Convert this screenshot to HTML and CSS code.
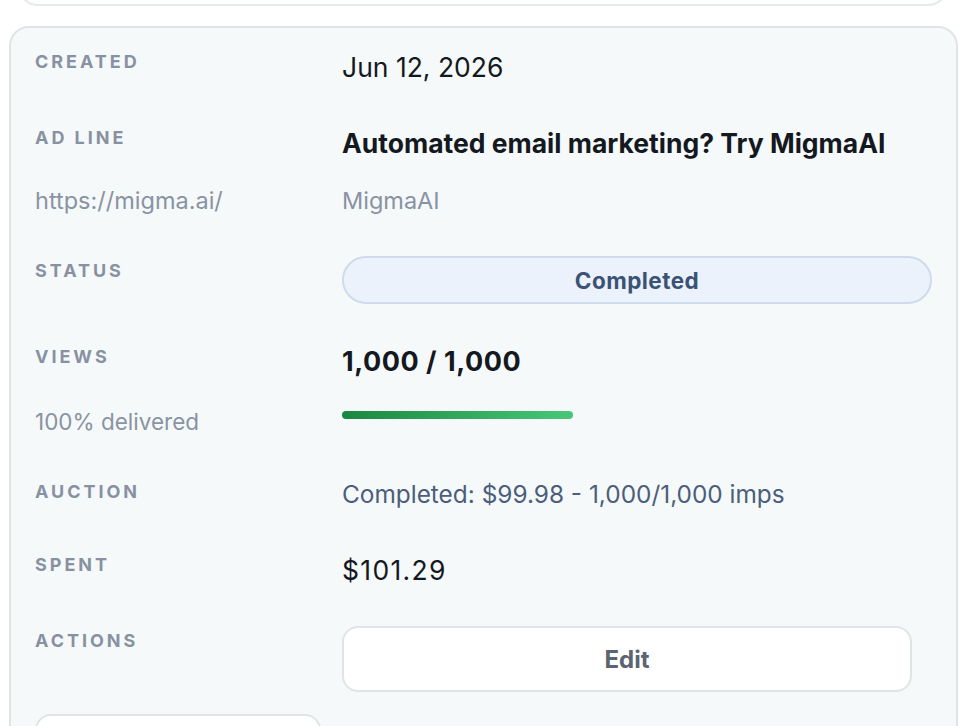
FILE: index.html
```html
<!DOCTYPE html>
<html lang="en">
<head>
    <meta charset="UTF-8">
    <meta name="viewport" content="width=device-width, initial-scale=1.0">
    <title>Ad details</title>
<link rel="stylesheet" href="styles.css">
</head>
<body>
    <div class="card card-prev"></div>

    <div class="card details">
        <div class="row">
            <div class="label">Created</div>
            <div class="value">Jun 12, 2026</div>
        </div>

        <div class="row row-adline">
            <div class="label">Ad line</div>
            <div class="value headline">Automated email marketing? Try MigmaAI</div>
        </div>

        <div class="row row-url">
            <div class="muted">https://migma.ai/</div>
            <div class="muted">MigmaAI</div>
        </div>

        <div class="row row-status">
            <div class="label label-status">Status</div>
            <div class="pill">Completed</div>
        </div>

        <div class="row row-views">
            <div class="label">Views</div>
            <div class="value count">1,000 / 1,000</div>
        </div>

        <div class="row row-progress">
            <div class="muted delivered">100% delivered</div>
            <div class="track">
                <div class="bar" style="width: 100%;"></div>
            </div>
        </div>

        <div class="row row-auction">
            <div class="label label-auction">Auction</div>
            <div class="value auction">Completed: $99.98 - 1,000/1,000 imps</div>
        </div>

        <div class="row row-spent">
            <div class="label">Spent</div>
            <div class="value spent">$101.29</div>
        </div>

        <div class="row row-actions">
            <div class="label label-actions">Actions</div>
            <button class="btn btn-edit">Edit</button>
        </div>

        <div class="row row-more">
            <button class="btn btn-more"></button>
        </div>
    </div>
</body>
</html>
```

FILE: styles.css
```css
body {
    margin: 0;
    background: #fff;
    font-family: Inter, "Noto Sans", sans-serif;
    color: #14181f;
    overflow: hidden;
}

.card {
    background: #f6f9f9;
    border: 2px solid #dfe5e5;
    border-radius: 20px;
}

.card-prev {
    height: 40px;
    margin: -38px 16px 0 18px;
    background: #fff;
    border-color: #e6eaea;
}

.details {
    margin: 20px 6px 0 9px;
    padding: 23px 24px 40px 24px;
    height: 800px;
}

.row {
    display: grid;
    grid-template-columns: 307px 1fr;
    align-items: start;
}

.label {
    font-size: 18px;
    line-height: 22px;
    font-weight: 700;
    letter-spacing: 0.165em;
    text-transform: uppercase;
    color: #8891a2;
}

.value {
    font-size: 26.5px;
    line-height: 32px;
    color: #14181f;
}

.headline {
    font-weight: 700;
    font-size: 26.5px;
}

.muted {
    font-size: 23.5px;
    line-height: 32px;
    color: #8993a3;
}

.delivered {
    font-size: 22.5px;
}

.row-adline { margin-top: 44px; }
.row-url { margin-top: 26px; }
.row-status { margin-top: 39px; }
.row-views { margin-top: 42px; }
.row-progress { margin-top: 28px; }
.row-auction { margin-top: 40px; }
.row-spent { margin-top: 44px; }
.row-actions { margin-top: 40px; }
.row-more { margin-top: 22px; }

.label-status { margin-top: 4px; }
.label-auction { margin-top: 3px; }
.label-actions { margin-top: 4px; }

.pill {
    height: 44px;
    border: 2px solid #cddbec;
    border-radius: 24px;
    background: #ebf2fb;
    color: #3c5275;
    font-size: 22.5px;
    font-weight: 700;
    letter-spacing: 0.02em;
    display: flex;
    align-items: center;
    justify-content: center;
}

.count {
    font-weight: 700;
    font-size: 27px;
    letter-spacing: 0.02em;
}

.track {
    width: 231px;
    margin-top: 5px;
}

.bar {
    height: 8px;
    border-radius: 4px;
    background: linear-gradient(90deg, #1b8741, #46c878);
}

.auction {
    font-size: 24.4px;
    color: #4b5e7b;
}

.spent {
    letter-spacing: 0.05em;
}

.btn {
    font-family: Inter, "Noto Sans", sans-serif;
    background: #fff;
    border: 2px solid #dfe5e5;
    border-radius: 16px;
    cursor: pointer;
}

.btn-edit {
    width: 570px;
    height: 66px;
    font-size: 24px;
    font-weight: 700;
    color: #5b6471;
}

.btn-more {
    width: 286px;
    height: 60px;
}
```
